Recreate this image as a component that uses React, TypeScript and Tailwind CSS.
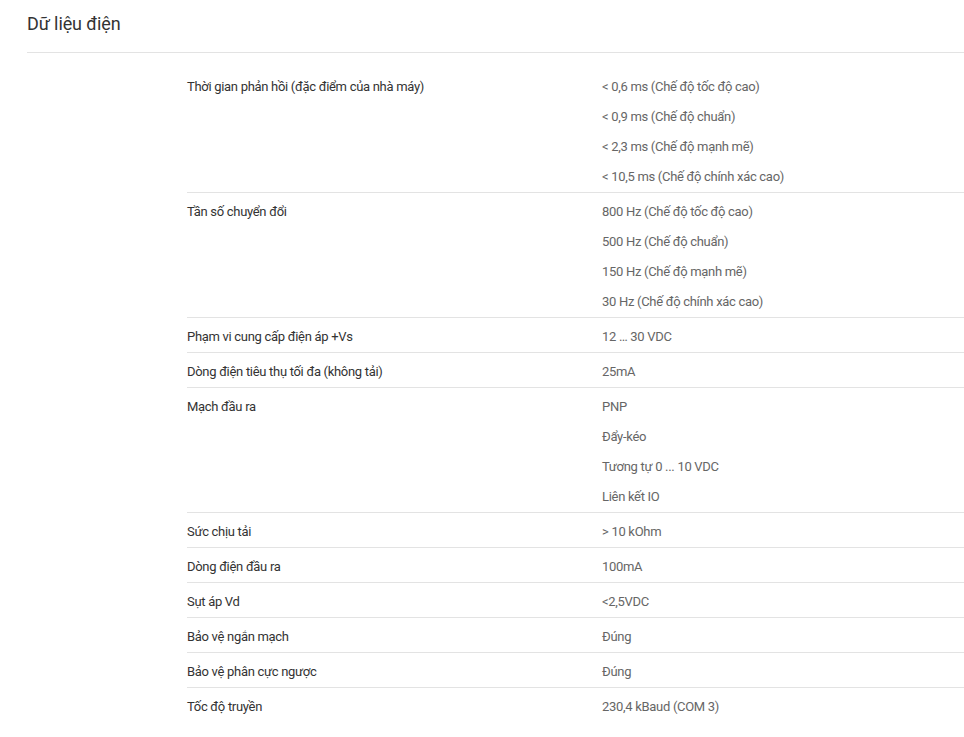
const rows: { label: string; values: string[] }[] = [
  {
    label: 'Thời gian phản hồi (đặc điểm của nhà máy)',
    values: [
      '< 0,6 ms (Chế độ tốc độ cao)',
      '< 0,9 ms (Chế độ chuẩn)',
      '< 2,3 ms (Chế độ mạnh mẽ)',
      '< 10,5 ms (Chế độ chính xác cao)',
    ],
  },
  {
    label: 'Tần số chuyển đổi',
    values: [
      '800 Hz (Chế độ tốc độ cao)',
      '500 Hz (Chế độ chuẩn)',
      '150 Hz (Chế độ mạnh mẽ)',
      '30 Hz (Chế độ chính xác cao)',
    ],
  },
  { label: 'Phạm vi cung cấp điện áp +Vs', values: ['12 … 30 VDC'] },
  { label: 'Dòng điện tiêu thụ tối đa (không tải)', values: ['25mA'] },
  {
    label: 'Mạch đầu ra',
    values: ['PNP', 'Đẩy-kéo', 'Tương tự 0 ... 10 VDC', 'Liên kết IO'],
  },
  { label: 'Sức chịu tải', values: ['> 10 kOhm'] },
  { label: 'Dòng điện đầu ra', values: ['100mA'] },
  { label: 'Sụt áp Vd', values: ['<2,5VDC'] },
  { label: 'Bảo vệ ngắn mạch', values: ['Đúng'] },
  { label: 'Bảo vệ phân cực ngược', values: ['Đúng'] },
  { label: 'Tốc độ truyền', values: ['230,4 kBaud (COM 3)'] },
];

export default function App() {
  return (
    <div className="min-h-[737px] bg-white pl-[27px] font-['Roboto',sans-serif]">
      {/* Section header */}
      <div className="border-b border-[#e3e3e3] pt-3 pb-4">
        <h2 className="text-[18px] leading-6 tracking-[-0.1px] text-[#333]">Dữ liệu điện</h2>
      </div>

      {/* Spec table */}
      <div className="mt-[14px] ml-[160px] text-[13px] leading-5 tracking-[-0.3px]">
        {rows.map((row, i) => (
          <div
            key={row.label}
            className={
              'flex border-t pt-[9px] pb-[5px] ' +
              (i === 0 ? 'border-transparent' : 'border-[#e3e3e3]')
            }
          >
            <div className="w-[415px] shrink-0 text-[#333]">{row.label}</div>
            <div className="flex flex-col gap-[10px] text-[#666]">
              {row.values.map((v) => (
                <div key={v}>{v}</div>
              ))}
            </div>
          </div>
        ))}
      </div>
    </div>
  );
}
